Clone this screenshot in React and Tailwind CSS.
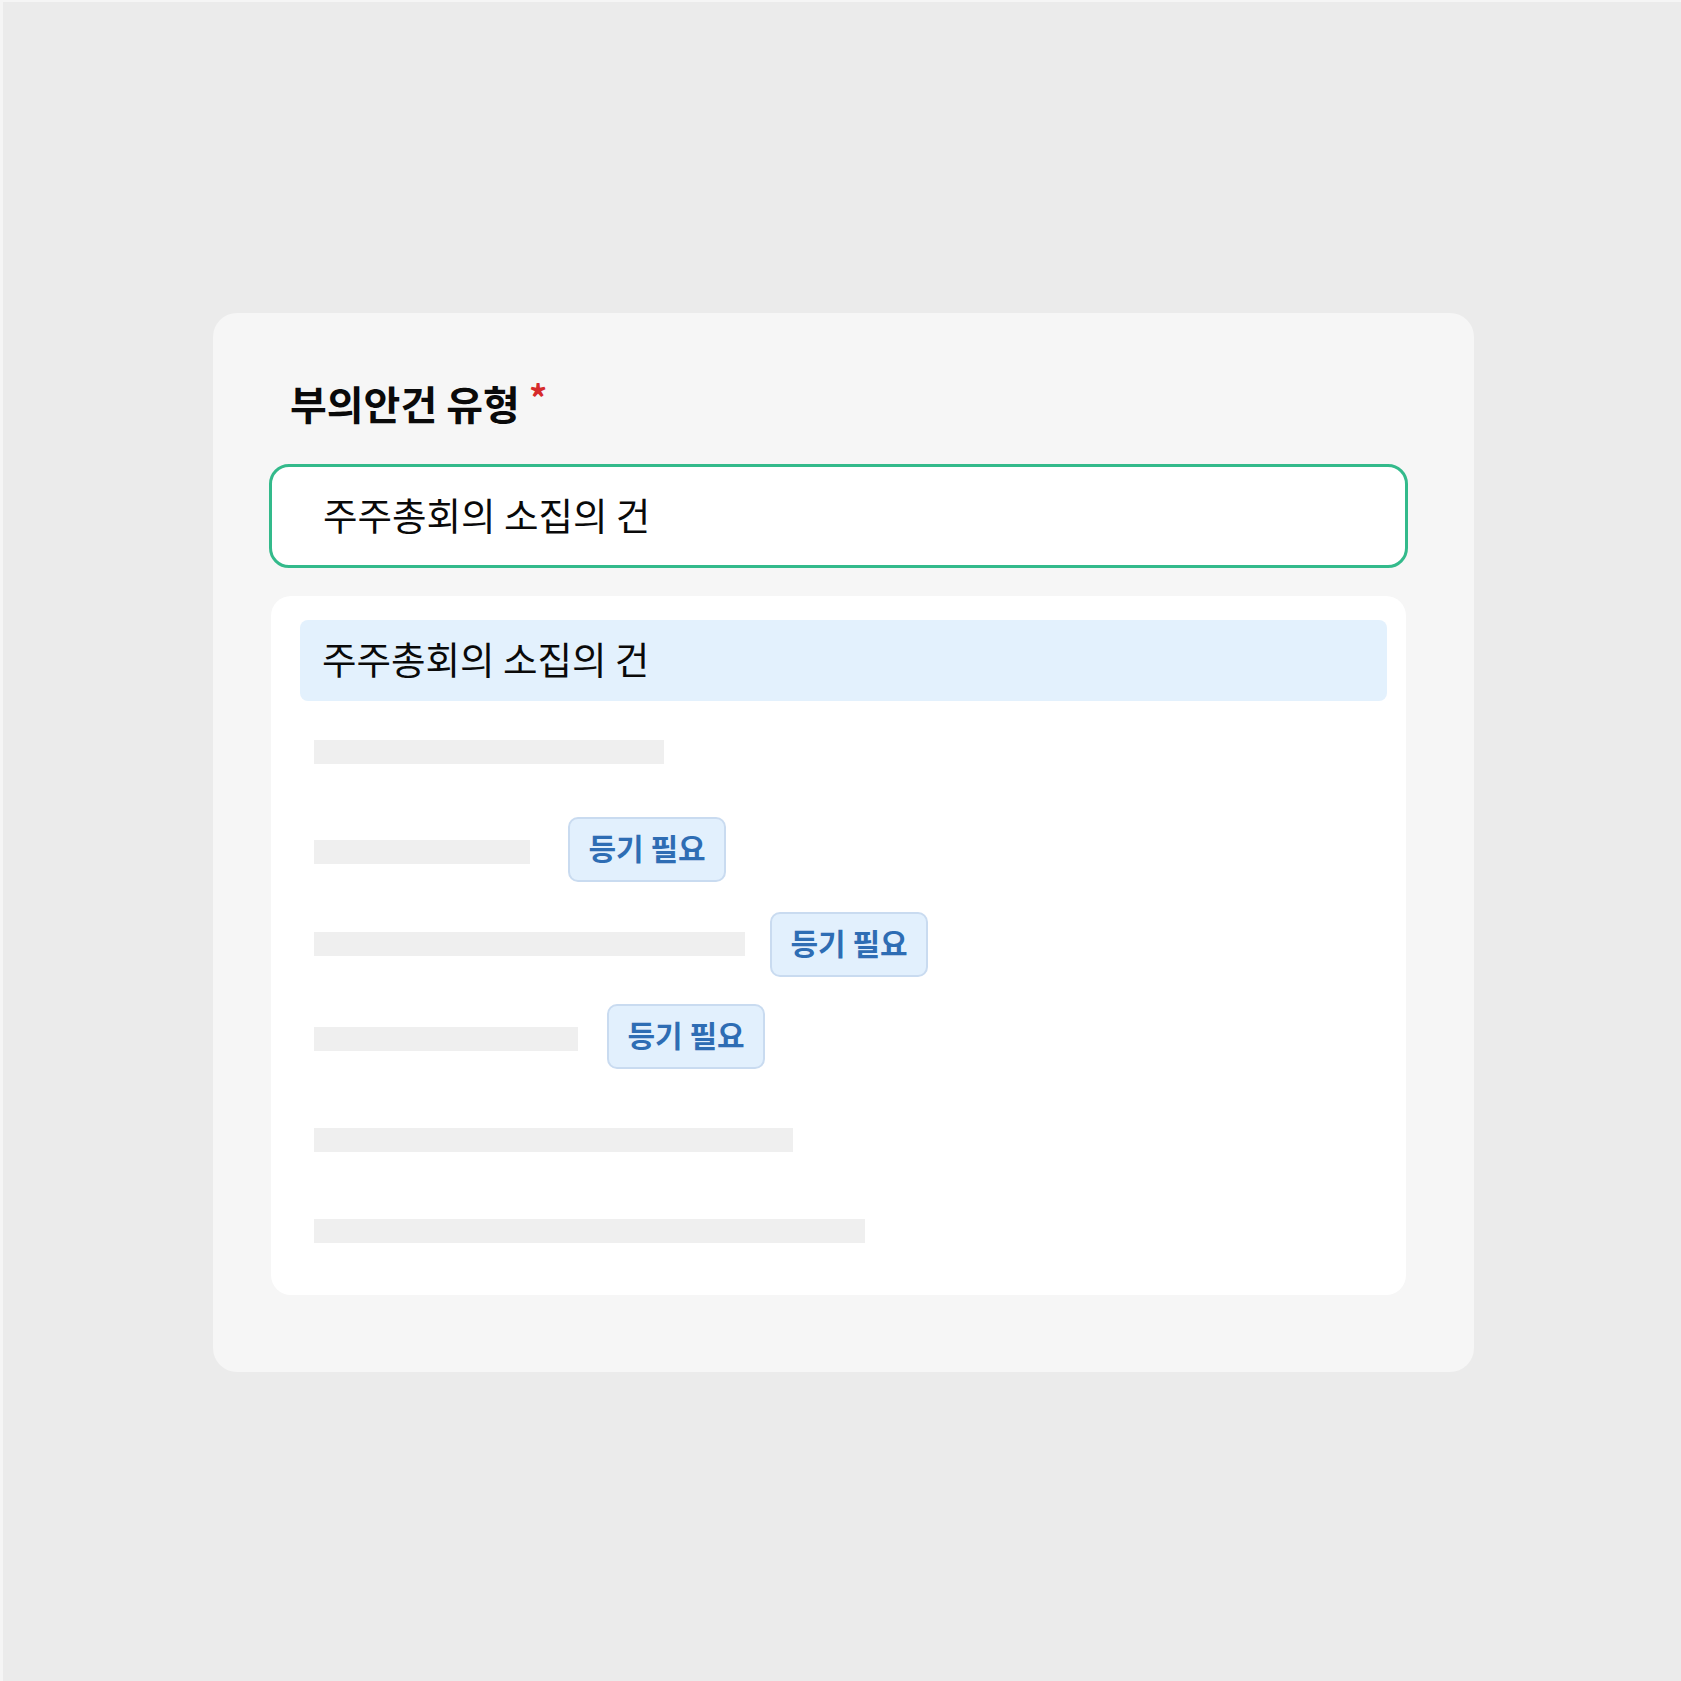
const FONT = { fontFamily: '"Noto Sans CJK KR", "Noto Sans", sans-serif' };

const rows = [
  { top: 39, width: 350 },
  { top: 76, width: 216, badge: 'ml-[38px] -mt-[6px]' },
  { top: 68, width: 431, badge: 'ml-[25px]' },
  { top: 71, width: 264, badge: 'ml-[29px] -mt-[6px]' },
  { top: 77, width: 479 },
  { top: 67, width: 551 },
];

const rowMargin = {
  39: 'mt-[39px]',
  76: 'mt-[76px]',
  68: 'mt-[68px]',
  71: 'mt-[71px]',
  77: 'mt-[77px]',
  67: 'mt-[67px]',
};

const Badge = ({ className }) => (
  <span
    className={`flex h-[65px] w-[158px] shrink-0 items-center justify-center rounded-[10px] border-2 border-[#c9dbf0] bg-[#e2f0fd] pb-[4px] text-[30px] font-bold leading-none text-[#2e6db4] ${className}`}
  >
    등기 필요
  </span>
);

export default function App() {
  return (
    <div
      className="flex min-h-[1681px] w-[1681px] flex-col border-l-[3px] border-t-[2px] border-[#f5f5f5] bg-[#ebebeb] pl-[210px] pt-[311px]"
      style={FONT}
    >
      {/* card */}
      <div className="flex h-[1059px] w-[1261px] flex-col rounded-[24px] bg-[#f6f6f6] pl-[56px] pt-[67px]">
        {/* label */}
        <div className="flex items-start pl-[21px]">
          <h2 className="text-[40px] font-bold leading-[46px] text-[#0a0a0a]">부의안건 유형</h2>
          <span className="ml-[9px] mt-[-7px] text-[36px] font-bold leading-[46px] text-[#d62b2b]">*</span>
        </div>

        {/* selected value */}
        <div className="mt-[38px] flex h-[104px] w-[1139px] items-center rounded-[20px] border-[3px] border-[#33ba8b] bg-white pb-[4px] pl-[51px]">
          <span className="text-[37.5px] leading-none text-[#0a0a0a]">주주총회의 소집의 건</span>
        </div>

        {/* dropdown list */}
        <div className="ml-[2px] mt-[28px] flex h-[699px] w-[1135px] flex-col rounded-[20px] bg-white pl-[29px] pt-[24px]">
          <div className="flex h-[81px] w-[1087px] items-center rounded-[8px] bg-[#e3f1fd] pb-[6px] pl-[22px]">
            <span className="text-[37.5px] leading-none text-[#0a0a0a]">주주총회의 소집의 건</span>
          </div>

          {rows.map((row, i) => (
            <div key={i} className={`flex h-[24px] items-center pl-[14px] ${rowMargin[row.top]}`}>
              <div className="h-[24px] bg-[#efefef]" style={{ width: row.width }} />
              {row.badge && <Badge className={row.badge} />}
            </div>
          ))}
        </div>
      </div>
    </div>
  );
}
